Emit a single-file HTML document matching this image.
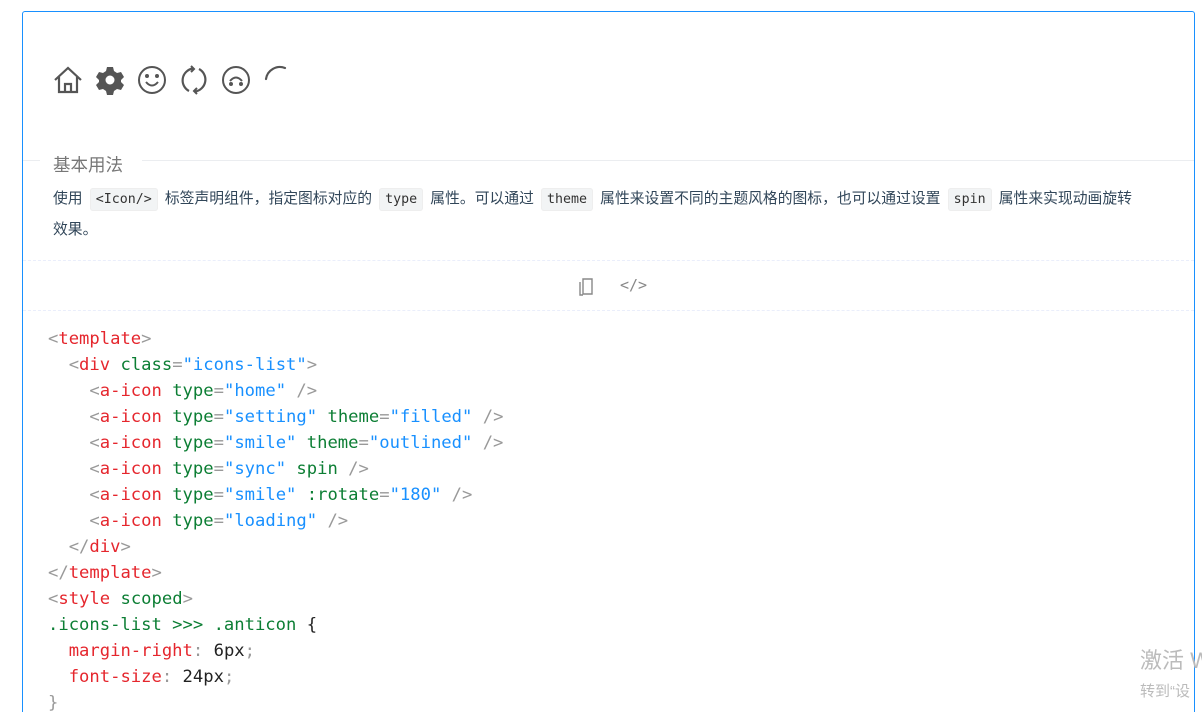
<!DOCTYPE html>
<html><head><meta charset="utf-8"><style>
html,body{margin:0;width:1202px;height:712px;overflow:hidden;background:#fff;font-family:"Liberation Sans","Noto Sans CJK SC",sans-serif;position:relative}
.box{position:absolute;left:22px;top:11px;width:1173px;height:720px;border:1px solid #1890ff;border-bottom:none;border-radius:3px 3px 0 0;box-sizing:border-box}
.icons{position:absolute;left:53px;top:65px;display:flex}
.icons svg{width:30px;height:30px;margin-right:12px;display:block}
.hr{position:absolute;left:23px;right:8px;top:160px;border-top:1px solid #ebedf0}
.title{position:absolute;left:40px;top:152px;background:#fff;padding:0 13px 0 13px;width:76px;font-size:17.5px;color:#777}
.desc{position:absolute;left:53px;top:184px;width:1095px;font-size:14.8px;line-height:30px;color:#314659}
code{font-family:"DejaVu Sans Mono",monospace;font-size:13.3px;background:#f2f4f5;border:1px solid #eee;border-radius:3px;padding:3px 5px;margin:0 3px;color:#333}
.d{position:absolute;left:23px;right:8px;border-top:1px dashed #eaeefb}
pre{position:absolute;left:48px;top:326px;margin:0;font-family:"DejaVu Sans Mono",monospace;font-size:17.2px;line-height:26px;color:#999}
.t{color:#e5262d}.a{color:#0c7e34}.s{color:#1890ff}.k{color:#222}
.wm{position:absolute;left:1140px;top:647px;color:#bbb;font-size:22px;line-height:28px;white-space:nowrap}
.wm2{position:absolute;left:1140px;top:680px;color:#bbb;font-size:15px;white-space:nowrap}
</style></head><body>
<div class="box"></div>
<div class="icons">
<svg viewBox="0 0 30 30" fill="none" stroke="#555" stroke-width="2.2"><path d="M2 15L15 3l13 12M6 12v15h18V12M12 27v-8h6v8"/></svg>
<svg viewBox="0 0 30 30"><path fill="#555" d="M12 2h6l1 4 3 2 4-1 3 5-3 3v2l3 3-3 5-4-1-3 2-1 4h-6l-1-4-3-2-4 1-3-5 3-3v-2l-3-3 3-5 4 1 3-2z"/><circle cx="15" cy="15" r="4.5" fill="#fff"/></svg>
<svg viewBox="0 0 30 30" fill="none" stroke="#555" stroke-width="2"><circle cx="15" cy="15" r="13"/><path d="M9 17q6 7 12 0"/><circle cx="10" cy="11" r="1" fill="#555"/><circle cx="20" cy="11" r="1" fill="#555"/></svg>
<svg viewBox="0 0 30 30" fill="none" stroke="#555" stroke-width="2.2"><path d="M10 26A12 12 0 0 1 14 3.5M20 4A12 12 0 0 1 16 26.5"/><path d="M12 1l3 3-3 3M18 23l-3 3 3 3" stroke-width="2"/></svg>
<svg viewBox="0 0 30 30" fill="none" stroke="#555" stroke-width="2"><circle cx="15" cy="15" r="13"/><path d="M9 16q6-7 12 0"/><circle cx="10" cy="19" r="1" fill="#555"/><circle cx="20" cy="19" r="1" fill="#555"/></svg>
<svg viewBox="0 0 30 30" fill="none" stroke="#555" stroke-width="2.2"><path d="M3 14A14 14 0 0 1 22 3" stroke-linecap="round"/></svg>
</div>
<div class="hr"></div><div class="title">基本用法</div>
<div class="desc">使用 <code>&lt;Icon/&gt;</code> 标签声明组件，指定图标对应的 <code>type</code> 属性。可以通过 <code>theme</code> 属性来设置不同的主题风格的图标，也可以通过设置 <code>spin</code> 属性来实现动画旋转<br>效果。</div>
<div class="d" style="top:260px"></div><div class="d" style="top:310px"></div>
<svg style="position:absolute;left:577px;top:277px" width="18" height="20" viewBox="0 0 18 20" fill="none" stroke="#888" stroke-width="1.4"><path d="M6 2h9v15H6zM3 5v13h3"/></svg>
<div style="position:absolute;left:620px;top:276px;color:#888;font-size:15px;font-family:'DejaVu Sans Mono',monospace">&lt;/&gt;</div>
<pre>&lt;<span class="t">template</span>&gt;
  &lt;<span class="t">div</span> <span class="a">class</span>=<span class="s">"icons-list"</span>&gt;
    &lt;<span class="t">a-icon</span> <span class="a">type</span>=<span class="s">"home"</span> /&gt;
    &lt;<span class="t">a-icon</span> <span class="a">type</span>=<span class="s">"setting"</span> <span class="a">theme</span>=<span class="s">"filled"</span> /&gt;
    &lt;<span class="t">a-icon</span> <span class="a">type</span>=<span class="s">"smile"</span> <span class="a">theme</span>=<span class="s">"outlined"</span> /&gt;
    &lt;<span class="t">a-icon</span> <span class="a">type</span>=<span class="s">"sync"</span> <span class="a">spin</span> /&gt;
    &lt;<span class="t">a-icon</span> <span class="a">type</span>=<span class="s">"smile"</span> <span class="a">:rotate</span>=<span class="s">"180"</span> /&gt;
    &lt;<span class="t">a-icon</span> <span class="a">type</span>=<span class="s">"loading"</span> /&gt;
  &lt;/<span class="t">div</span>&gt;
&lt;/<span class="t">template</span>&gt;
&lt;<span class="t">style</span> <span class="a">scoped</span>&gt;
<span class="a">.icons-list &gt;&gt;&gt; .anticon</span> <span class="k">{</span>
  <span class="t">margin-right</span>: <span class="k">6px</span>;
  <span class="t">font-size</span>: <span class="k">24px</span>;
}</pre>
<div class="wm">激活 W</div><div class="wm2">转到“设</div>
</body></html>
